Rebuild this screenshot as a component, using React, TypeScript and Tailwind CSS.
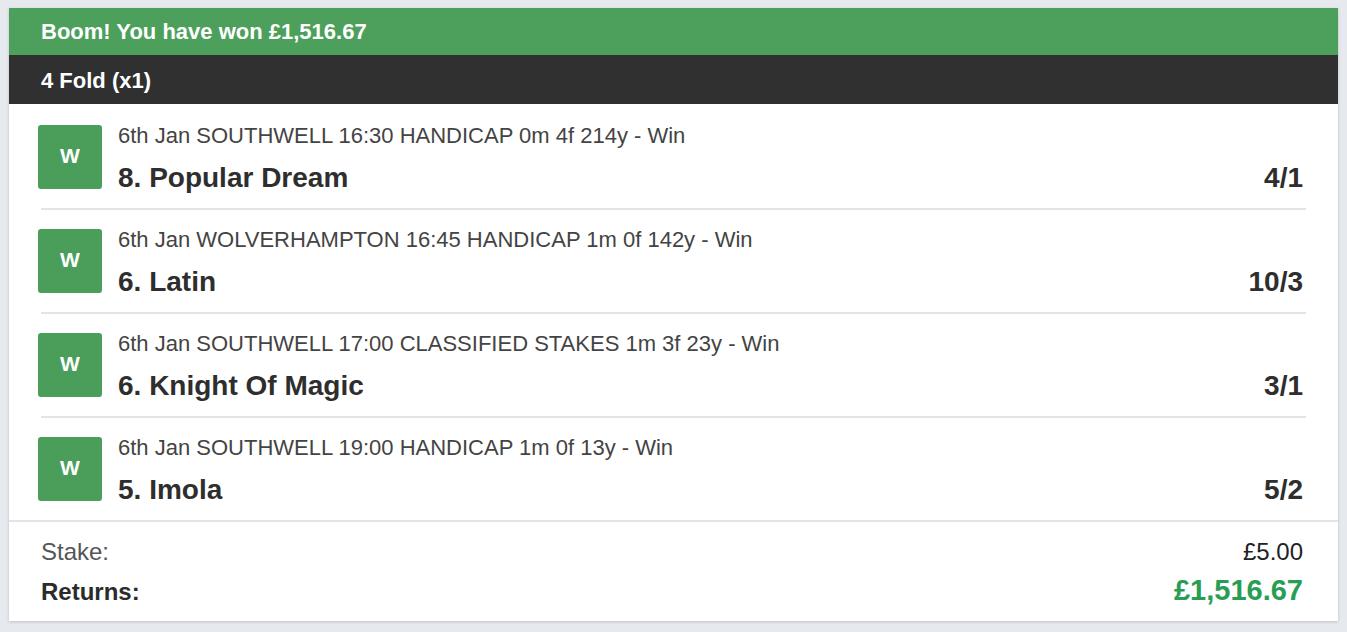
import React from 'react';

type Leg = { meta: string; name: string; odds: string };

const legs: Leg[] = [
    { meta: '6th Jan SOUTHWELL 16:30 HANDICAP 0m 4f 214y - Win', name: '8. Popular Dream', odds: '4/1' },
    { meta: '6th Jan WOLVERHAMPTON 16:45 HANDICAP 1m 0f 142y - Win', name: '6. Latin', odds: '10/3' },
    { meta: '6th Jan SOUTHWELL 17:00 CLASSIFIED STAKES 1m 3f 23y - Win', name: '6. Knight Of Magic', odds: '3/1' },
    { meta: '6th Jan SOUTHWELL 19:00 HANDICAP 1m 0f 13y - Win', name: '5. Imola', odds: '5/2' },
];

const LegRow: React.FC<{ leg: Leg; last: boolean }> = ({ leg, last }) => (
    <div className={`flex items-start pt-[19px] ${last ? 'h-[102px]' : 'h-[104px] border-b-2 border-[#e1e4e8]'}`}>
        <div className="-ml-[3px] w-16 h-16 shrink-0 rounded-[3px] bg-[#4a9e5a] text-white font-bold text-[21px] leading-none flex items-center justify-center pb-[3px]">
            W
        </div>
        <div className="flex-1 ml-4">
            <div className="text-[22px] leading-[22px] text-[#444]">{leg.meta}</div>
            <div className="flex items-baseline justify-between mt-[17px] mr-[3px]">
                <span className="text-[28px] leading-[28px] font-bold text-[#2e2e2e]">{leg.name}</span>
                <span className="text-[28px] leading-[28px] font-bold text-[#2e2e2e]">{leg.odds}</span>
            </div>
        </div>
    </div>
);

export default function App() {
    return (
        <div className="min-h-screen bg-[#e6e9ed] pt-2 px-[9px] pb-3" style={{ fontFamily: '"Liberation Sans", Arial, sans-serif' }}>
            <div className="bg-white shadow-[0_1px_3px_rgba(0,0,0,0.18)]">
                <div className="h-[47px] bg-[#4ca05c] px-8 flex items-center text-white font-bold text-[22px] leading-[22px]">
                    Boom! You have won £1,516.67
                </div>
                <div className="h-[49px] bg-[#303030] px-8 pt-[2px] flex items-center text-white font-bold text-[22px] leading-[22px]">
                    4 Fold (x1)
                </div>
                <div className="px-8 pt-[2px]">
                    {legs.map((leg, i) => (
                        <LegRow key={i} leg={leg} last={i === legs.length - 1} />
                    ))}
                </div>
                <div className="border-t-2 border-[#e1e4e8] px-8 pt-[18px] pb-[14px]">
                    <div className="flex justify-between items-baseline leading-6 mr-[3px]">
                        <span className="text-[24px] text-[#555]">Stake:</span>
                        <span className="text-[24px] text-[#222]">£5.00</span>
                    </div>
                    <div className="flex justify-between items-baseline leading-[30px] mt-[11px] mr-[3px]">
                        <span className="text-[24px] font-bold text-[#2b2b2b]">Returns:</span>
                        <span className="text-[29px] font-bold text-[#2a9d55]">£1,516.67</span>
                    </div>
                </div>
            </div>
        </div>
    );
}
